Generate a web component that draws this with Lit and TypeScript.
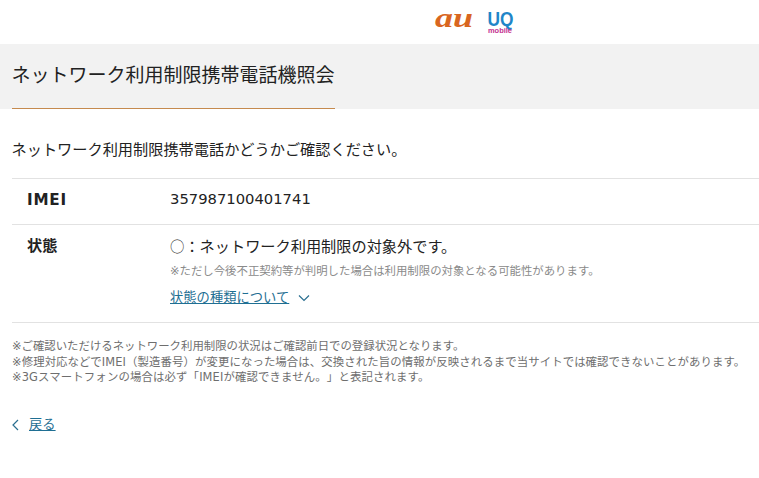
import { LitElement, html, css } from "lit";
import { customElement } from "lit/decorators.js";

@customElement("app-root")
export class AppRoot extends LitElement {
  static styles = css`
    :host {
      display: block;
      width: 759px;
      height: 478px;
      overflow: hidden;
      background: #fff;
      color: #222;
      font-family: "DejaVu Sans", "Noto Sans CJK JP", sans-serif;
      font-size: 15.2px;
      text-spacing-trim: space-all;
    }
    .top {
      height: 44px;
      padding: 8px 0 0 435px;
      box-sizing: border-box;
    }
    .logos { display: block; overflow: visible; }
    .au {
      font-family: "Liberation Serif", serif;
      font-style: italic;
      font-weight: 700;
      font-size: 28px;
      fill: #d9661f;
    }
    .uq {
      font-family: "Liberation Sans", sans-serif;
      font-weight: 700;
      font-size: 20px;
      fill: #1f86c8;
    }
    .mobile {
      font-family: "Liberation Sans", sans-serif;
      font-weight: 700;
      font-size: 8px;
      fill: #c4308f;
    }
    .band {
      height: 65px;
      background: #f2f2f2;
      padding-left: 12px;
      box-sizing: border-box;
    }
    h1 {
      margin: 0;
      width: 323px;
      height: 65px;
      box-sizing: border-box;
      padding-top: 18px;
      font-size: 19px;
      line-height: 26px;
      font-weight: 400;
      white-space: nowrap;
      text-indent: -0.5px;
      border-bottom: 1px solid #c58a4e;
    }
    .intro {
      margin: 0;
      padding: 30px 0 0 12px;
      line-height: 22px;
      height: 69px;
      box-sizing: border-box;
      white-space: nowrap;
      text-indent: -0.5px;
    }
    .table {
      margin-left: 12px;
      border-top: 1px solid #e2e2e2;
    }
    .row {
      display: grid;
      grid-template-columns: 158px 1fr;
      border-bottom: 1px solid #e2e2e2;
    }
    .row.imei { height: 46px; box-sizing: border-box; padding-top: 10px; }
    .row.state { height: 98px; box-sizing: border-box; padding-top: 11px; }
    .label {
      padding-left: 15px;
      line-height: 20px;
      font-weight: 700;
    }
    .label.latin { letter-spacing: 0.8px; padding-top: 1px; }
    .value { line-height: 22px; white-space: nowrap; }
    .num { font-size: 14.75px; line-height: 20px; }
    .status { height: 22px; line-height: 22px; }
    .mark {
      font-family: "Noto Sans CJK JP", sans-serif;
      font-weight: 300;
      line-height: 0;
      font-size: 14.4px;
    }
    .sub {
      margin-top: 5px;
      font-size: 11.4px;
      line-height: 16px;
      color: #8a8a8a;
    }
    .more {
      margin-top: 9px;
      display: flex;
      align-items: center;
      gap: 9px;
      line-height: 20px;
    }
    a {
      color: #1f6f93;
      text-decoration: underline;
      font-size: 13.3px;
    }
    .notes {
      margin: 16px 0 0 12px;
      font-size: 11.4px;
      line-height: 15.5px;
      color: #6e6e6e;
      white-space: nowrap;
    }
    .notes .repair { letter-spacing: 0.1px; }
    .notes .three-g { letter-spacing: 0.14px; }
    .back {
      margin: 29px 0 0 12px;
      display: flex;
      align-items: center;
      gap: 10px;
      line-height: 20px;
    }
    svg.chev { display: block; fill: none; stroke: #2a6f90; stroke-width: 1.2; }
  `;

  render() {
    return html`
      <div class="top">
        <svg class="logos" width="84" height="28" viewBox="0 0 84 28">
          <text class="au" x="0" y="19" textLength="38" lengthAdjust="spacingAndGlyphs">au</text>
          <text class="uq" x="52.5" y="18" textLength="26" lengthAdjust="spacingAndGlyphs">UQ</text>
          <text class="mobile" x="53" y="24.5" textLength="24" lengthAdjust="spacingAndGlyphs">mobile</text>
        </svg>
      </div>
      <div class="band"><h1>ネットワーク利用制限携帯電話機照会</h1></div>
      <p class="intro">ネットワーク利用制限携帯電話かどうかご確認ください。</p>
      <div class="table">
        <div class="row imei">
          <div class="label latin">IMEI</div>
          <div class="value num">357987100401741</div>
        </div>
        <div class="row state">
          <div class="label">状態</div>
          <div class="value">
            <div class="status"><span class="mark">○</span>：ネットワーク利用制限の対象外です。</div>
            <div class="sub">※ただし今後不正契約等が判明した場合は利用制限の対象となる可能性があります。</div>
            <div class="more">
              <a href="#">状態の種類について</a>
              <svg class="chev" width="12" height="8" viewBox="0 0 12 8"><path d="M1 1.5 6 6.5 11 1.5" /></svg>
            </div>
          </div>
        </div>
      </div>
      <div class="notes">
        <div>※ご確認いただけるネットワーク利用制限の状況はご確認前日での登録状況となります。</div>
        <div class="repair">※修理対応などでIMEI（製造番号）が変更になった場合は、交換された旨の情報が反映されるまで当サイトでは確認できないことがあります。</div>
        <div class="three-g">※3Gスマートフォンの場合は必ず「IMEIが確認できません。」と表記されます。</div>
      </div>
      <div class="back">
        <svg class="chev" width="7" height="12" viewBox="0 0 7 12"><path d="M6 1 1 6 6 11" /></svg>
        <a href="#">戻る</a>
      </div>
    `;
  }
}
